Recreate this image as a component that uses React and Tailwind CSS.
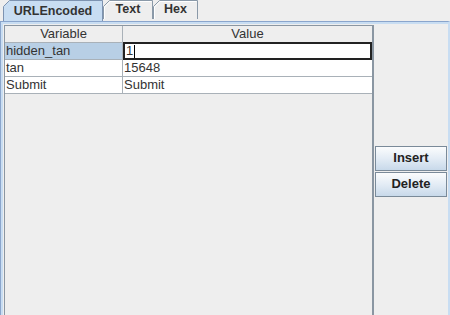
import React from 'react';

const rows = [
    { name: 'hidden_tan', value: '1', editing: true },
    { name: 'tan', value: '15648' },
    { name: 'Submit', value: 'Submit' },
];

function Tab({ label, width, selected }) {
    const h = selected ? 21 : 19;
    return (
        <div className={`relative ${selected ? 'h-[21px]' : 'h-[19px] mb-[2px]'}`} style={{ width }}>
            <svg className="absolute inset-0" width={width} height={h}>
                <path
                    d={`M0.5 ${h} L0.5 6.5 L6.5 0.5 L${width - 0.5} 0.5 L${width - 0.5} ${h}`}
                    fill={selected ? '#c8ddf2' : '#eeeeee'}
                    stroke={selected ? '#7d93b1' : '#8a99a8'}
                />
                {!selected && <path d={`M1.5 ${h} L1.5 7 L7 1.5 L${width - 1.5} 1.5`} fill="none" stroke="#ffffff" />}
            </svg>
            <div className={`relative flex h-full items-center justify-center font-bold text-[12.5px] text-[#333333] ${selected ? 'pt-[1px]' : ''}`}>
                {label}
            </div>
        </div>
    );
}

function JButton({ children }) {
    return (
        <button className="h-[25px] w-full border border-[#7a8a99] bg-gradient-to-b from-[#fbfcfd] via-[#e3ecf5] to-[#c8d9ea] font-bold text-[13px] text-[#222222]">
            {children}
        </button>
    );
}

export default function App() {
    return (
        <div className="w-[450px] h-[315px] overflow-hidden bg-[#eeeeee] font-['Liberation_Sans',Arial,sans-serif]">
            <div className="flex items-end pl-[3px] pt-[1px] h-[21px]">
                <Tab label="URLEncoded" width={100} selected />
                <Tab label="Text" width={50} />
                <Tab label="Hex" width={45} />
            </div>
            <div className="h-[300px] border-t border-[#8aa5cc] border-l border-l-[#8aa5cc] border-r-2 border-r-[#c8ddf2] bg-[#c8ddf2] pt-[2px] pl-[2px]">
                <div className="flex h-full bg-[#eeeeee] pt-[1px] pl-[1px]">
                    <div className="w-[370px] h-full border border-[#8a96a2] border-r-2 border-r-[#8a96a2] bg-[#eeeeee]">
                        <div className="grid grid-cols-[118px_1fr] h-[17px] border-b border-[#a9b1b8] bg-[#eeeeee] text-[13px] text-[#333333] leading-[16px]">
                            <div className="border-r border-[#a9b1b8] text-center">Variable</div>
                            <div className="text-center">Value</div>
                        </div>
                        {rows.map((r) => (
                            <div key={r.name} className="grid grid-cols-[118px_1fr] h-[17px] border-b border-[#a9b1b8] text-[13px] text-[#333333] leading-[16px]">
                                <div className={`border-r border-[#a9b1b8] pl-[1px] ${r.editing ? 'bg-[#b8cfe5]' : 'bg-white'}`}>{r.name}</div>
                                {r.editing ? (
                                    <div className="bg-white border-2 border-[#222222] -mt-[1px] -mb-[1px] pl-[1px] leading-[14px] flex items-center">
                                        <span>{r.value}</span>
                                        <span className="ml-[1px] w-[1px] h-[13px] bg-black" />
                                    </div>
                                ) : (
                                    <div className="bg-white pl-[1px]">{r.value}</div>
                                )}
                            </div>
                        ))}
                    </div>
                    <div className="flex-1 flex flex-col justify-center gap-[1px] pl-[1px] pr-[1px] pb-[4px]">
                        <JButton>Insert</JButton>
                        <JButton>Delete</JButton>
                    </div>
                </div>
            </div>
        </div>
    );
}
